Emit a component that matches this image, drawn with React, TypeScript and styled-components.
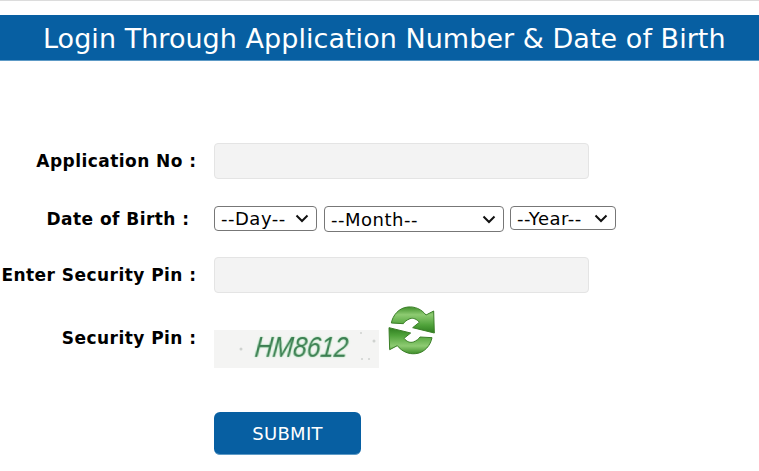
import styled, { createGlobalStyle } from "styled-components";

const chevron =
    "data:image/svg+xml,%3Csvg xmlns='http://www.w3.org/2000/svg' width='14' height='9' viewBox='0 0 14 9'%3E%3Cpath d='M1.500 1.500L7 7L12.500 1.500' fill='none' stroke='%23111' stroke-width='2'/%3E%3C/svg%3E";

const GlobalStyle = createGlobalStyle`
    html, body {
        margin: 0;
        padding: 0;
        background: #fff;
    }
    body {
        font-family: "DejaVu Sans", Verdana, sans-serif;
        color: #000;
    }
`;

const Page = styled.div`
    width: 759px;
    height: 471px;
    overflow: hidden;
    border-top: 1px solid #dcdcdc;
    box-sizing: border-box;
    padding-top: 14px;
`;

const Heading = styled.h1`
    margin: 0;
    height: 46px;
    box-sizing: border-box;
    background: #075fa2;
    border-bottom: 1px solid #5d9ac6;
    color: #fff;
    font-size: 27px;
    font-weight: 400;
    letter-spacing: 0.04px;
    line-height: 47px;
    padding-left: 43px;
    white-space: nowrap;
`;

const Form = styled.form`
    display: flex;
    flex-direction: column;
    padding-top: 82px;
`;

const Row = styled.div<{ $height: number; $mb: number }>`
    display: grid;
    grid-template-columns: 214px 1fr;
    align-items: center;
    height: ${(p) => p.$height}px;
    margin-bottom: ${(p) => p.$mb}px;
`;

const Label = styled.label<{ $inset?: number }>`
    font-size: 17px;
    font-weight: 700;
    letter-spacing: 0.45px;
    text-align: right;
    white-space: nowrap;
    padding-right: ${(p) => 17.500 + (p.$inset ?? 0)}px;
`;

const TextInput = styled.input`
    width: 375px;
    height: 36px;
    box-sizing: border-box;
    background: #f3f3f3;
    border: 1px solid #e4e4e4;
    border-radius: 4px;
    padding: 0 8px;
`;

const Selects = styled.div`
    display: flex;
    align-items: flex-start;
`;

const Select = styled.select<{ $width: number; $height: number; $mr: number }>`
    appearance: none;
    width: ${(p) => p.$width}px;
    height: ${(p) => p.$height}px;
    margin-right: ${(p) => p.$mr}px;
    box-sizing: border-box;
    padding: 0 0 0 6px;
    font-family: "DejaVu Sans", Verdana, sans-serif;
    font-size: 18px;
    letter-spacing: 0.5px;
    color: #000;
    border: 1px solid #777;
    border-radius: 4px;
    background: #fff url("${chevron}") no-repeat right 7px center;
`;

const CaptchaRow = styled.div`
    display: flex;
    align-items: flex-start;
    gap: 5px;
`;

const Captcha = styled.div`
    position: relative;
    margin-top: 21px;
    width: 165px;
    height: 38px;
    background: #f4f4f3;
    overflow: hidden;
    display: flex;
    align-items: center;
    justify-content: center;
`;

const CaptchaText = styled.span`
    font-family: "Liberation Sans", Arial, sans-serif;
    font-style: italic;
    font-size: 30px;
    color: #3c7f52;
    text-shadow: 0 0 2px #8fe09f;
    transform: translate(5px, -2px) skewX(-6deg) scaleX(0.82);
    filter: blur(0.4px);
`;

const Specks = styled.svg`
    position: absolute;
    inset: 0;
`;

const RefreshSvg = styled.svg`
    display: block;
    flex: none;
    margin-top: -6px;
`;

const SubmitButton = styled.button`
    width: 147px;
    height: 43px;
    background: #075fa2;
    border: none;
    border-bottom: 1px solid #5d9ac6;
    border-radius: 6px;
    color: #fff;
    font-family: "DejaVu Sans", Verdana, sans-serif;
    font-size: 18px;
    letter-spacing: 0.3px;
`;

const arrowPath =
    "M22 60C26 38 44 14 72 12C92 10 112 18 126 36L149 24L151 90L86 74L106 58C98 48 88 44 78 47C68 51 62 56 58 62Z";

function RefreshIcon() {
    return (
        <RefreshSvg width="56" height="54" viewBox="0 0 168 162">
            <defs>
                <linearGradient id="arrowTop" x1="0" y1="0" x2="0" y2="1">
                    <stop offset="0" stopColor="#3f8f2a" />
                    <stop offset="0.3" stopColor="#8ecb72" />
                    <stop offset="0.7" stopColor="#4fa23a" />
                    <stop offset="1" stopColor="#2f7d20" />
                </linearGradient>
            </defs>
            <path d={arrowPath} fill="url(#arrowTop)" stroke="#3b7f28" strokeWidth="3" />
            <path d={arrowPath} fill="url(#arrowTop)" stroke="#3b7f28" strokeWidth="3" transform="rotate(180 83 82)" />
        </RefreshSvg>
    );
}

export default function App() {
    return (
        <>
            <GlobalStyle />
            <Page>
                <Heading>Login Through Application Number &amp; Date of Birth</Heading>
                <Form>
                    <Row $height={36} $mb={27}>
                        <Label>Application No :</Label>
                        <TextInput type="text" />
                    </Row>
                    <Row $height={26} $mb={25}>
                        <Label $inset={7}>Date of Birth :</Label>
                        <Selects>
                            <Select $width={103} $height={25} $mr={7}><option>--Day--</option></Select>
                            <Select $width={180} $height={26} $mr={6}><option>--Month--</option></Select>
                            <Select $width={106} $height={24} $mr={0}><option>--Year--</option></Select>
                        </Selects>
                    </Row>
                    <Row $height={36} $mb={15}>
                        <Label>Enter Security Pin :</Label>
                        <TextInput type="text" />
                    </Row>
                    <Row $height={60} $mb={44}>
                        <Label>Security Pin :</Label>
                        <CaptchaRow>
                            <Captcha>
                                <Specks width="165" height="38" viewBox="0 0 165 38">
                                    <g fill="#cfd2cf">
                                        <circle cx="27" cy="19" r="1.500" />
                                        <circle cx="147" cy="3" r="1" />
                                        <circle cx="160" cy="11" r="1.500" />
                                        <circle cx="148" cy="29" r="1" />
                                        <circle cx="155" cy="29" r="1" />
                                    </g>
                                </Specks>
                                <CaptchaText>HM8612</CaptchaText>
                            </Captcha>
                            <RefreshIcon />
                        </CaptchaRow>
                    </Row>
                    <Row $height={43} $mb={0}>
                        <span />
                        <SubmitButton type="button">SUBMIT</SubmitButton>
                    </Row>
                </Form>
            </Page>
        </>
    );
}
